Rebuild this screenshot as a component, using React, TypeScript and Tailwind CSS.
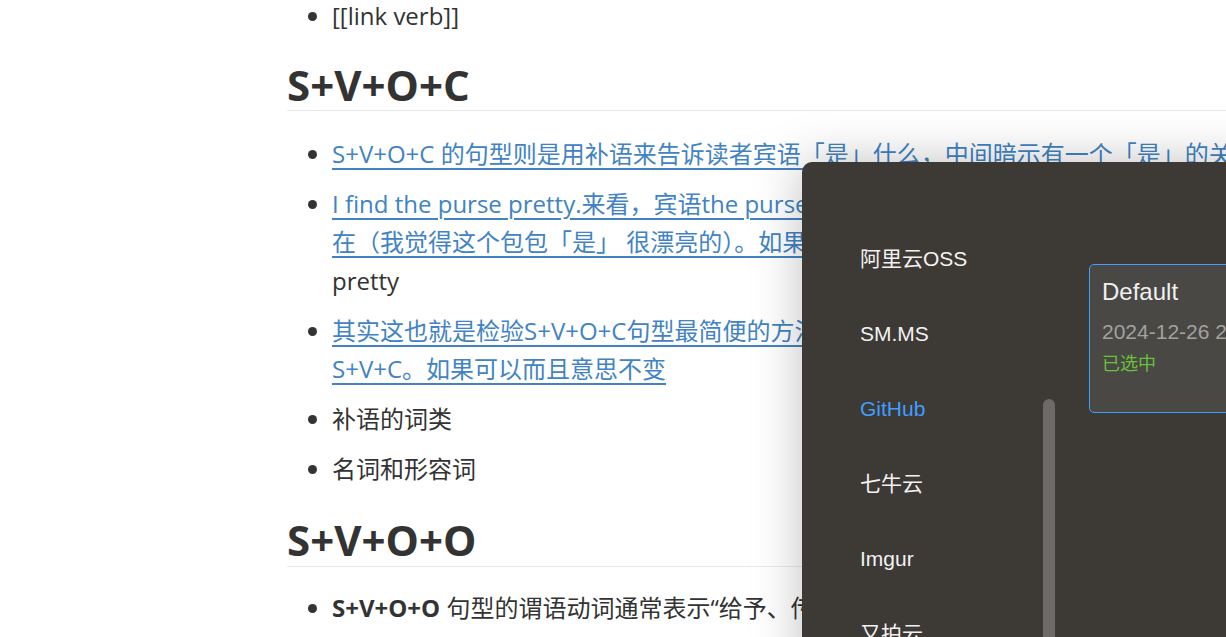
import React from "react";

const body = "font-['Open_Sans','Noto_Sans_CJK_SC',sans-serif]";
const ui = "font-['Liberation_Sans','Noto_Sans_CJK_SC',sans-serif]";
const link = "text-[#4183c4] underline underline-offset-[5px] decoration-[1.5px]";

const uploaders = [
    { name: "阿里云OSS" },
    { name: "SM.MS" },
    { name: "GitHub", active: true },
    { name: "七牛云" },
    { name: "Imgur" },
    { name: "又拍云" },
];

function Note() {
    return (
        <div className={`${body} text-[#333] pl-[287px] w-[1600px]`}>
            <ul className="list-disc pl-[45px] mt-[-3px] text-[24px] leading-[38.5px]">
                <li>[[link verb]]</li>
            </ul>

            <h2 className="mt-[26px] text-[42px] leading-[46px] font-bold border-b border-[#eaeaea] pb-[2px]">
                S+V+O+C
            </h2>

            <ul className="list-disc pl-[45px] mt-[24px] text-[24px] leading-[38.5px] flex flex-col gap-[11.5px] whitespace-nowrap">
                <li>
                    <span className={link}>
                        S+V+O+C 的句型则是用补语来告诉读者宾语「是」什么，中间暗示有一个「是」的关系，补语补充说明宾语
                    </span>
                </li>
                <li>
                    <span className={link}>
                        I find the purse pretty.来看，宾语the purse和补语pretty之间暗示着
                    </span>
                    <br />
                    <span className={link}>
                        在（我觉得这个包包「是」 很漂亮的）。如果把be动词加进去就变成the purse is
                    </span>
                    <br />
                    pretty
                </li>
                <li>
                    <span className={link}>
                        其实这也就是检验S+V+O+C句型最简便的方法，把宾语和补语拿出来
                    </span>
                    <br />
                    <span className={link}>S+V+C。如果可以而且意思不变</span>
                </li>
                <li>补语的词类</li>
                <li>名词和形容词</li>
            </ul>

            <h2 className="mt-[28px] text-[42px] leading-[46px] font-bold border-b border-[#eaeaea] pb-[3px]">
                S+V+O+O
            </h2>

            <ul className="list-disc pl-[45px] mt-[22px] text-[24px] leading-[38.5px] whitespace-nowrap">
                <li>
                    <b>S+V+O+O</b> 句型的谓语动词通常表示“给予、传递”的意思
                </li>
            </ul>
        </div>
    );
}

function UploaderDialog() {
    return (
        <div className={`${ui} absolute left-[802px] top-[162px] w-[700px] h-[600px] bg-[#3d3935] rounded-tl-[10px] shadow-[0_0_50px_rgba(0,0,0,0.25)] flex`}>
            <div className="relative w-[287px] shrink-0 pt-[59px] pl-[58px]">
                {uploaders.map((u) => (
                    <div
                        key={u.name}
                        className={`h-[75px] flex items-center text-[21px] ${u.active ? "text-[#409eff]" : "text-[#f2f2f2]"}`}
                    >
                        {u.name}
                    </div>
                ))}
                <div className="absolute left-[241px] top-[237px] w-[12px] h-[400px] rounded-full bg-[#6c6b6a]" />
            </div>

            <div className="pt-[102px]">
                <div className="w-[320px] h-[149px] rounded-[5px] border border-[#409eff] bg-[#4a4845] pl-[12px] pt-[11px]">
                    <div className="text-[24px] leading-[32px] text-[#f0f0f0]">Default</div>
                    <div className="mt-[9px] text-[21px] leading-[30px] text-[#a3a19e] whitespace-nowrap">
                        2024-12-26 20:15:32
                    </div>
                    <div className="mt-[4px] text-[18px] leading-[26px] text-[#67c23a]">已选中</div>
                </div>
            </div>
        </div>
    );
}

export default function App() {
    return (
        <div className="relative w-[1226px] h-[637px] overflow-hidden bg-white">
            <Note />
            <UploaderDialog />
        </div>
    );
}
